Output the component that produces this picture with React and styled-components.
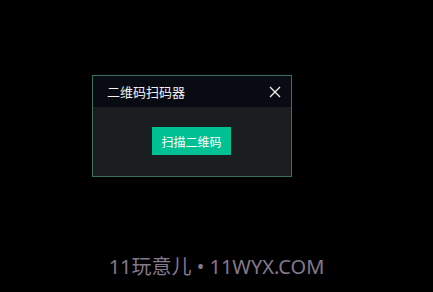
import React from "react";
import styled, { createGlobalStyle } from "styled-components";

const Global = createGlobalStyle`
  html, body { margin: 0; padding: 0; background: #000; }
  body { font-family: "Noto Sans CJK SC", "Noto Sans", sans-serif; }
`;

const Page = styled.div`
  width: 433px;
  height: 292px;
  background: #000;
  display: flex;
  flex-direction: column;
  align-items: flex-start;
  padding: 75px 0 0 92px;
  box-sizing: border-box;
`;

const Dialog = styled.div`
  width: 200px;
  height: 102px;
  box-sizing: border-box;
  border: 1px solid #3b6f62;
  background: #1a1e21;
  display: flex;
  flex-direction: column;
`;

const Header = styled.div`
  height: 31px;
  background: #080c12;
  display: flex;
  align-items: center;
  justify-content: space-between;
  padding: 0 9px 0 14px;
`;

const Title = styled.span`
  color: #f2f2f2;
  font-size: 13px;
  line-height: 1;
`;

const Close = styled.button`
  width: 14px;
  height: 14px;
  padding: 0;
  border: 0;
  background: transparent;
  display: flex;
  align-items: center;
  justify-content: center;
  cursor: pointer;
`;

const Body = styled.div`
  flex: 1;
  display: flex;
  justify-content: center;
  padding-top: 20px;
  padding-right: 1px;
`;

const Button = styled.button`
  width: 79px;
  height: 28px;
  border: 0;
  background: #00c193;
  color: #ffffff;
  font-family: "Noto Sans CJK SC", sans-serif;
  font-size: 12px;
  padding: 0;
  cursor: pointer;
`;

const Watermark = styled.div`
  align-self: stretch;
  margin-left: -92px;
  margin-top: 77px;
  text-align: center;
  color: #847a8c;
  font-family: "Noto Sans", "Noto Sans CJK SC", sans-serif;
  font-size: 20px;
  line-height: 26px;
`;

export default function App() {
  return (
    <>
      <Global />
      <Page>
        <Dialog>
          <Header>
            <Title>二维码扫码器</Title>
            <Close aria-label="关闭">
              <svg width="12" height="12" viewBox="0 0 12 12">
                <path d="M1 1 L11 11 M11 1 L1 11" stroke="#f2f2f2" strokeWidth="1.3" />
              </svg>
            </Close>
          </Header>
          <Body>
            <div>
              <Button>扫描二维码</Button>
            </div>
          </Body>
        </Dialog>
        <Watermark>11玩意儿 • 11WYX.COM</Watermark>
      </Page>
    </>
  );
}
